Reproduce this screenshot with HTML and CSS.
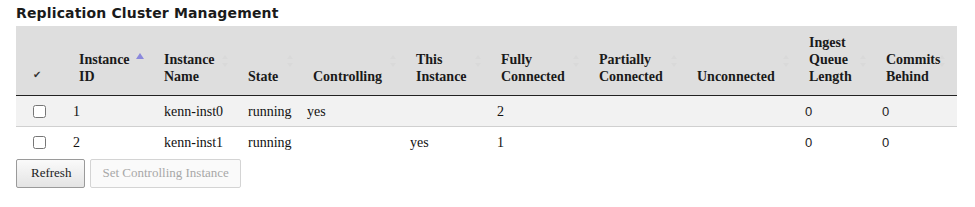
FILE: index.html
```
<!DOCTYPE html>
<html lang="en">
  <head>
    <meta charset="utf-8" />
    <title>Replication Cluster Management</title>
    <link rel="stylesheet" href="styles.css">
  </head>
  <body>
    <div class="container">
      <h2 class="title">Replication Cluster Management</h2>
      <table id="cluster">
        <thead>
          <tr>
            <th class="col-check"><span class="checkmark">&#10004;</span></th>
            <th class="col-id">Instance<br />ID<span class="sort sort-asc"></span></th>
            <th class="col-name">Instance<br />Name<span class="sort"></span></th>
            <th class="col-state">State<span class="sort"></span></th>
            <th class="col-ctrl">Controlling<span class="sort"></span></th>
            <th class="col-this">This<br />Instance<span class="sort"></span></th>
            <th class="col-full">Fully<br />Connected<span class="sort"></span></th>
            <th class="col-part">Partially<br />Connected<span class="sort"></span></th>
            <th class="col-unc">Unconnected<span class="sort"></span></th>
            <th class="col-queue">Ingest<br />Queue<br />Length<span class="sort"></span></th>
            <th class="col-behind">Commits<br />Behind<span class="sort"></span></th>
          </tr>
        </thead>
        <tbody>
          <tr class="odd">
            <td><input type="checkbox" class="row-check" /></td>
            <td class="shift">1</td>
            <td>kenn-inst0</td>
            <td>running</td>
            <td class="shift">yes</td>
            <td></td>
            <td class="shift-sm">2</td>
            <td></td>
            <td></td>
            <td class="num">0</td>
            <td class="num">0</td>
          </tr>
          <tr>
            <td><input type="checkbox" class="row-check" /></td>
            <td class="shift">2</td>
            <td>kenn-inst1</td>
            <td>running</td>
            <td></td>
            <td class="shift">yes</td>
            <td class="shift-sm">1</td>
            <td></td>
            <td></td>
            <td class="num">0</td>
            <td class="num">0</td>
          </tr>
        </tbody>
      </table>
      <div class="actions">
        <button id="refresh" class="btn">Refresh</button>
        <button id="setctrl" class="btn" disabled>Set Controlling Instance</button>
      </div>
    </div>
  </body>
</html>
```

FILE: styles.css
```
* {
  box-sizing: border-box;
}

body {
  margin: 0;
  background: #fff;
  font-family: "Times New Roman", "Liberation Serif", "Noto Serif", "DejaVu Serif", serif;
  font-size: 14px;
  color: #111;
}

.container {
  padding: 4px 16px 0 16px;
}

.title {
  margin: 0 0 4px 0;
  font-family: "DejaVu Sans", Verdana, sans-serif;
  font-size: 14px;
  font-weight: bold;
  letter-spacing: 0.15px;
  color: #1a1a1a;
  line-height: 18px;
}

#cluster {
  width: 941px;
  border-collapse: collapse;
  table-layout: fixed;
  font-family: "Times New Roman", "Liberation Serif", "Noto Serif", "DejaVu Serif", serif;
  font-size: 14px;
}

#cluster th {
  position: relative;
  background-color: #dedede;
  text-align: left;
  vertical-align: bottom;
  font-weight: bold;
  line-height: 17px;
  padding: 8px 8px 10px 8px;
  border-bottom: 1px solid #222;
  color: #1a1a1a;
}

#cluster td {
  height: 31px;
  padding: 0 8px;
  line-height: 17px;
  vertical-align: middle;
  border-bottom: 1px solid #d0d0d0;
}

#cluster td.shift {
  padding-left: 2px;
}

#cluster td.shift-sm {
  padding-left: 4px;
}

#cluster tbody tr:last-child td {
  border-bottom: none;
}

#cluster tr.odd td {
  background-color: #f2f2f2;
}

#cluster td.num {
  font-family: "Liberation Sans", Arial, sans-serif;
  font-size: 13px;
  padding-left: 4px;
  color: #222;
}

.col-check { width: 55px; }
.col-id { width: 85px; }
.col-name { width: 84px; }
.col-state { width: 65px; }
.col-ctrl { width: 103px; }
.col-this { width: 85px; }
.col-full { width: 98px; }
.col-part { width: 98px; }
.col-unc { width: 112px; }
.col-queue { width: 77px; }
.col-behind { width: 79px; }

#cluster th.col-check,
#cluster td:first-child {
  padding-left: 17px;
}

.checkmark {
  font-family: "DejaVu Sans", sans-serif;
  font-size: 10px;
  color: #333;
  position: relative;
  top: -2px;
}

/* sort arrows */
.sort {
  position: absolute;
  right: 12px;
  top: 50%;
  width: 6px;
  height: 12px;
  margin-top: -6px;
}

.sort::before,
.sort::after {
  content: "";
  position: absolute;
  left: 0;
  border-left: 3px solid transparent;
  border-right: 3px solid transparent;
}

.sort::before {
  top: 0;
  border-bottom: 4px solid #d9d9d9;
}

.sort::after {
  bottom: 0;
  border-top: 4px solid #d9d9d9;
}

.sort-asc {
  right: 14px;
  top: 27px;
  margin-top: 0;
}

.sort-asc::before {
  border-left-width: 4px;
  border-right-width: 4px;
  border-bottom: 6px solid #8a88dc;
}

.sort-asc::after {
  display: none;
}

.row-check {
  margin: 4px 0 0 0;
  width: 13px;
  height: 13px;
}

.actions {
  display: flex;
  gap: 5px;
  margin-top: 1px;
}

.btn {
  font-family: "Times New Roman", "Liberation Serif", "Noto Serif", "DejaVu Serif", serif;
  font-size: 13px;
  color: #222;
  height: 29px;
  padding: 0 12px;
  background: linear-gradient(#fafafa, #e4e4e4);
  border: 1px solid #9a9a9a;
  border-radius: 2px;
}

#refresh {
  padding: 0 13px 0 14px;
}

#setctrl {
  padding: 0 11px;
}

.btn:disabled {
  color: #a8a8a8;
  background: #fafafa;
  border-color: #d4d4d4;
}
```
